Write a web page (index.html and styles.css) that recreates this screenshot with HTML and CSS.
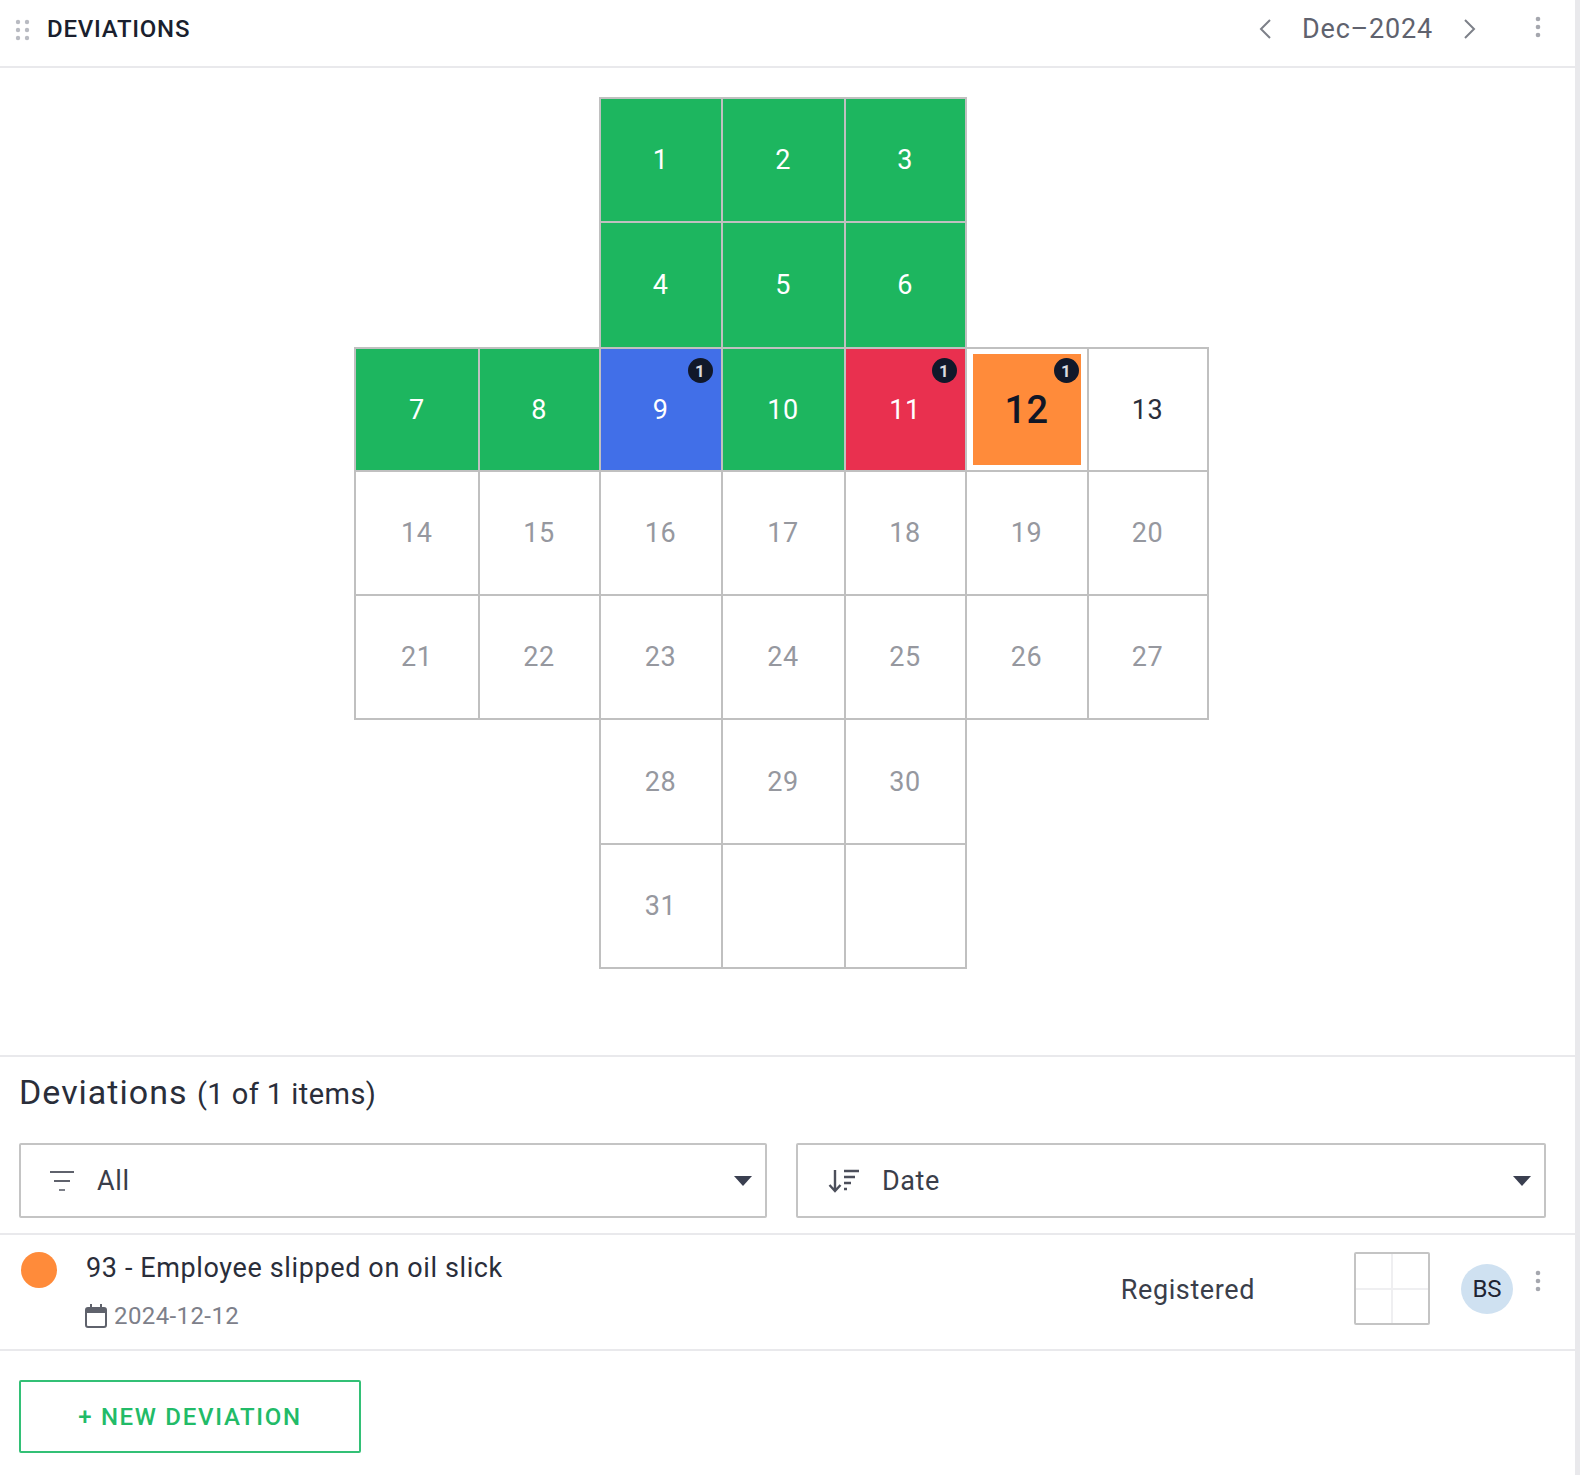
FILE: index.html
```html
<!DOCTYPE html>
<html lang="en">
<head>
<meta charset="utf-8">
<title>Deviations</title>
<link rel="stylesheet" href="styles.css">
</head>
<body>
<main class="panel">
  <header class="head">
    <svg class="grip" width="18" height="24" viewBox="0 0 18 24"><g fill="#b9bbc2"><circle cx="4" cy="4" r="2.2"/><circle cx="13" cy="4" r="2.2"/><circle cx="4" cy="12" r="2.2"/><circle cx="13" cy="12" r="2.2"/><circle cx="4" cy="20" r="2.2"/><circle cx="13" cy="20" r="2.2"/></g></svg>
    <h1 class="head-title">DEVIATIONS</h1>
    <div class="month">
      <svg class="chev" width="14" height="22" viewBox="0 0 14 22"><path d="M12 2 3 11l9 9" fill="none" stroke="#7d8089" stroke-width="2"/></svg>
      <span class="month-label">Dec–2024</span>
      <svg class="chev" width="14" height="22" viewBox="0 0 14 22"><path d="M2 2l9 9-9 9" fill="none" stroke="#7d8089" stroke-width="2"/></svg>
    </div>
    <svg class="kebab head-kebab" width="6" height="24" viewBox="0 0 6 24"><g fill="#a5a7ae"><circle cx="3" cy="4" r="2.3"/><circle cx="3" cy="12" r="2.3"/><circle cx="3" cy="20" r="2.3"/></g></svg>
  </header>

  <section class="cal-wrap">
    <div class="cal">
      <div class="gap"></div><div class="gap"></div>
      <div class="cell green">1</div><div class="cell green">2</div><div class="cell green">3</div>
      <div class="gap"></div><div class="gap"></div>

      <div class="gap"></div><div class="gap"></div>
      <div class="cell green">4</div><div class="cell green">5</div><div class="cell green">6</div>
      <div class="gap"></div><div class="gap"></div>

      <div class="cell green">7</div><div class="cell green">8</div>
      <div class="cell blue">9<span class="badge">1</span></div>
      <div class="cell green">10</div>
      <div class="cell red">11<span class="badge">1</span></div>
      <div class="cell today"><span class="today-box">12</span><span class="badge">1</span></div>
      <div class="cell current">13</div>

      <div class="cell">14</div><div class="cell">15</div><div class="cell">16</div><div class="cell">17</div><div class="cell">18</div><div class="cell">19</div><div class="cell">20</div>
      <div class="cell">21</div><div class="cell">22</div><div class="cell">23</div><div class="cell">24</div><div class="cell">25</div><div class="cell">26</div><div class="cell">27</div>

      <div class="gap"></div><div class="gap"></div>
      <div class="cell">28</div><div class="cell">29</div><div class="cell">30</div>
      <div class="gap"></div><div class="gap"></div>

      <div class="gap"></div><div class="gap"></div>
      <div class="cell">31</div><div class="cell"></div><div class="cell"></div>
      <div class="gap"></div><div class="gap"></div>
    </div>
  </section>

  <section class="list">
    <h2 class="list-title">Deviations <small class="list-count">(1 of 1 items)</small></h2>
    <div class="filters">
      <div class="select">
        <svg class="sel-icon" width="26" height="24" viewBox="0 0 26 24"><g fill="none" stroke="#5f626c" stroke-width="2"><path d="M1 3h24M5 12h16"/><path d="M10 21h6" stroke="#7d8089"/></g></svg>
        <span class="sel-text">All</span>
        <svg class="caret" width="18" height="10" viewBox="0 0 18 10"><path d="M0 0h18L9 10z" fill="#3a3f50"/></svg>
      </div>
      <div class="select">
        <svg class="sel-icon sel-sort" width="32" height="26" viewBox="0 0 32 26"><g fill="none" stroke="#4c4f5b" stroke-width="2.4"><path d="M7 2v21M1.500 17 7 23l5.500-6"/><path d="M16 3h15M16 9h11M16 15h7M16 21h3"/></g></svg>
        <span class="sel-text">Date</span>
        <svg class="caret" width="18" height="10" viewBox="0 0 18 10"><path d="M0 0h18L9 10z" fill="#3a3f50"/></svg>
      </div>
    </div>
    <article class="row">
      <span class="dot"></span>
      <div class="row-main">
        <div class="row-title">93 - Employee slipped on oil slick</div>
        <div class="row-date">
          <svg width="22" height="24" viewBox="0 0 22 24"><g fill="none" stroke="#5f626c" stroke-width="2"><rect x="1" y="4" width="20" height="19" rx="2"/><path d="M6 0v5M16 0v5"/></g><path d="M1 4h20v5H1z" fill="#5f626c"/></svg>
          <span>2024-12-12</span>
        </div>
      </div>
      <div class="row-status">Registered</div>
      <div class="thumb"><i></i><i></i><i></i><i></i></div>
      <div class="avatar">BS</div>
      <svg class="kebab row-kebab" width="6" height="24" viewBox="0 0 6 24"><g fill="#a5a7ae"><circle cx="3" cy="4" r="2.300"/><circle cx="3" cy="12" r="2.300"/><circle cx="3" cy="20" r="2.300"/></g></svg>
    </article>
    <div class="actions">
      <button class="new-btn" type="button">+ NEW DEVIATION</button>
    </div>
  </section>
</main>
</body>
</html>
```

FILE: styles.css
```css
* { box-sizing: border-box; }
html, body { margin: 0; padding: 0; background: #fff; }
body { font-family: Roboto, "Liberation Sans", sans-serif; color: #1a1f2e; }

.panel {
  width: 1580px;
  height: 1475px;
  border-right: 5px solid #e9e9ec;
  display: flex;
  flex-direction: column;
}

.head {
  height: 68px;
  flex: none;
  border-bottom: 2px solid #e9e9ec;
  display: flex;
  align-items: center;
  padding: 0 34px 8px 14px;
}
.grip { margin: 2px 15px 0 0; }
.head-title { margin: 0; font-size: 24px; font-weight: 500; letter-spacing: .75px; color: #1a1f2e; }
.month { margin-left: auto; display: flex; align-items: center; gap: 30px; }
.month-label { font-size: 27px; color: #5f626e; letter-spacing: .8px; }
.head-kebab { margin: 0 0 4px 58px; }

.cal-wrap { height: 987px; flex: none; padding-top: 29px; display: flex; justify-content: center; }
.cal {
  margin-left: -12px;
  display: grid;
  grid-template-columns: 123.5px 121px 122px 123px 121px 122px 120px;
  grid-template-rows: 124px 126px 123px 124px 124px 125px 124px;
  width: 855px;
  height: 872px;
}
.cell {
  position: relative;
  margin: 0 -2px -2px 0;
  border: 2px solid #c0c0c0;
  display: flex;
  align-items: center;
  justify-content: center;
  font-size: 27px;
  letter-spacing: .5px;
  color: #96989f;
  background: #fff;
}
.green { background: #1db65f; color: #fff; }
.blue { background: #416fe8; color: #fff; }
.red { background: #e9304f; color: #fff; }
.current { color: #2a2e3a; }
.today { padding: 5px 6px; }
.today-box {
  width: 100%;
  height: 100%;
  background: #ff8b3a;
  display: flex;
  align-items: center;
  justify-content: center;
  font-size: 38px;
  font-weight: 500;
  color: #101626;
}
.badge {
  position: absolute;
  top: 9px;
  right: 8px;
  width: 25px;
  height: 25px;
  border-radius: 50%;
  background: #11182a;
  color: #dadbe0;
  font-size: 17px;
  font-weight: 700;
  letter-spacing: 0;
  display: flex;
  align-items: center;
  justify-content: center;
}

.list { flex: 1; border-top: 2px solid #e9e9ec; display: flex; flex-direction: column; }
.list-title { margin: 0; padding: 11px 19px 0; height: 86px; font-size: 34px; font-weight: 400; letter-spacing: 1px; color: #2a2e3a; line-height: 48px; }
.list-count { font-size: 29px; letter-spacing: .45px; }
.filters { display: grid; grid-template-columns: 748px 750px; gap: 29px; padding-left: 19px; height: 90px; }
.select {
  height: 75px;
  border: 2px solid #c4c4c4;
  border-radius: 2px;
  display: flex;
  align-items: center;
  padding: 0 13px 0 28px;
}
.sel-sort { margin-left: 2px; }
.sel-text { font-size: 27px; letter-spacing: .6px; color: #3a3e4a; margin-left: 22px; }
.caret { margin-left: auto; }

.row {
  height: 118px;
  border-top: 2px solid #e9e9ec;
  border-bottom: 2px solid #e9e9ec;
  display: flex;
  align-items: flex-start;
  padding: 0 34px 0 21px;
}
.dot { width: 36px; height: 36px; margin-top: 17px; border-radius: 50%; background: #ff8b3a; flex: none; }
.row-main { margin-left: 29px; padding-top: 13px; }
.row-title { font-size: 27px; letter-spacing: .62px; line-height: 40px; color: #2a2e3a; }
.row-date { display: flex; align-items: center; gap: 7px; margin: 14px 0 0 -1px; font-size: 24px; letter-spacing: .4px; color: #7d808a; }
.row-status { margin-left: auto; margin-top: 35px; font-size: 27px; letter-spacing: .6px; line-height: 40px; color: #3a3e4a; }
.thumb {
  margin: 17px 0 0 99px;
  width: 76px;
  height: 73px;
  border: 2px solid #c4c4c4;
  border-radius: 2px;
  display: grid;
  grid-template-columns: 1fr 1fr;
  grid-template-rows: 1fr 1fr;
  gap: 2px;
  background: #efeff1;
}
.thumb i { background: #fff; }
.avatar {
  margin: 29px 0 0 31px;
  width: 52px;
  height: 50px;
  border-radius: 50%;
  background: #cfe1f1;
  display: flex;
  align-items: center;
  justify-content: center;
  font-size: 24px;
  color: #1f2433;
}
.row-kebab { margin: 34px 0 0 22px; }

.actions { padding: 29px 19px; }
.new-btn {
  width: 342px;
  height: 73px;
  border: 2px solid #33c076;
  border-radius: 2px;
  background: #fff;
  color: #22bb68;
  font-family: inherit;
  font-size: 24px;
  font-weight: 500;
  letter-spacing: 1.7px;
}
```
